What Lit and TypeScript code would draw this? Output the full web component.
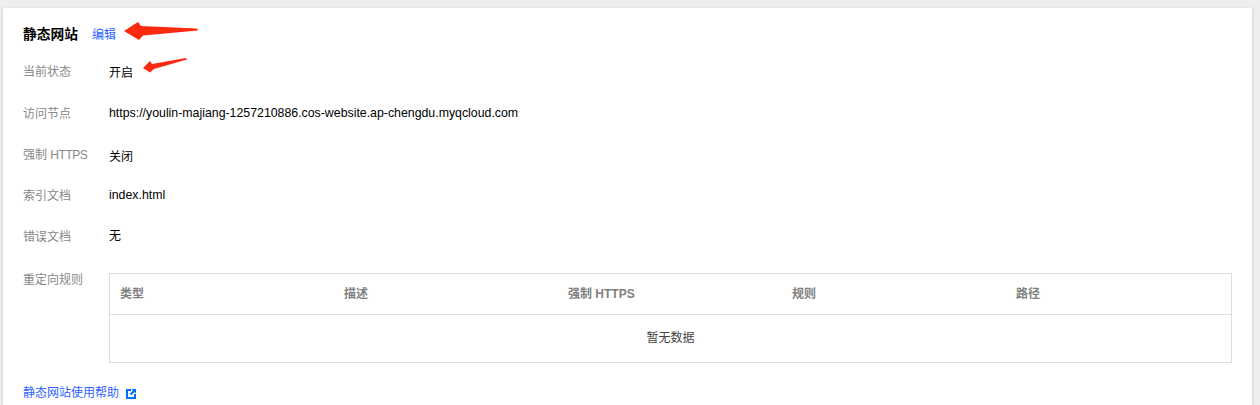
import { LitElement, html, css, svg } from 'lit';
import { customElement } from 'lit/decorators.js';

const COLUMNS = ['类型', '描述', '强制 HTTPS', '规则', '路径'];

// the two red hand-drawn arrows pasted over the screenshot
const arrows = svg`
  <path d="M124 31 L138 22 L141 26 L197 28.5 L198 30.5 L143 35.5 L139 40 Z" fill="#fb2a10"/>
  <path d="M143 68 L150 61 L152 64 L186 58 L187 59.5 L154 69 L150 72.5 Z" fill="#fb2a10"/>
`;

@customElement('app-root')
export class AppRoot extends LitElement {
  static styles = css`
    :host {
      display: block;
      height: 405px;
      overflow: hidden;
      position: relative;
      background: #eee;
      font-family: "Liberation Sans", "Noto Sans CJK SC", sans-serif;
      font-size: 12px;
      line-height: 18px;
      color: #000;
    }
    .card {
      box-sizing: border-box;
      margin: 8px 8px 0 3px;
      height: 397px;
      padding: 18px 20px 0 20px;
      background: #fff;
      box-shadow: 0 1px 3px rgba(0, 0, 0, 0.2);
    }
    .head {
      display: flex;
      align-items: center;
      gap: 14px;
      height: 18px;
    }
    h3 {
      margin: 0;
      font-size: 13.75px;
      font-weight: 700;
    }
    a {
      color: #2b5fff;
      text-decoration: none;
    }
    .rows {
      margin-top: 19px;
      display: flex;
      flex-direction: column;
      gap: 23px;
    }
    .row {
      display: flex;
      height: 18px;
    }
    .row:first-child { margin-bottom: 1px; }
    .label {
      width: 86px;
      flex: none;
      color: #888;
    }
    .tight { letter-spacing: -0.45px; }
    .off1 { padding-top: 1px; }
    .off2 { padding-top: 2px; }
    .up { margin-top: -1px; }
    .url { font-size: 12.33px; }
    .table-row {
      display: flex;
      margin-top: 27px;
    }
    .table-row .label { margin-top: -2px; }
    .table {
      flex: 1;
      border: 1px solid #ddd;
      height: 90px;
      box-sizing: border-box;
    }
    .thead {
      display: grid;
      grid-template-columns: repeat(5, 224px) 1fr;
      height: 40px;
      align-items: center;
      border-bottom: 1px solid #ddd;
      color: #808080;
      font-weight: 700;
    }
    .thead span { padding-left: 10px; }
    .empty {
      height: 46px;
      display: flex;
      align-items: center;
      justify-content: center;
      color: #444;
    }
    .help {
      display: flex;
      align-items: center;
      gap: 7px;
      margin-top: 21px;
    }
    .help svg { display: block; margin-top: 2px; }
    .arrows {
      position: absolute;
      inset: 0;
      pointer-events: none;
    }
  `;

  render() {
    return html`
      <div class="card">
        <div class="head">
          <h3>静态网站</h3>
          <a href="#">编辑</a>
        </div>
        <div class="rows">
          <div class="row"><div class="label">当前状态</div><div class="off1">开启</div></div>
          <div class="row"><div class="label">访问节点</div><div class="url up">https://youlin-majiang-1257210886.cos-website.ap-chengdu.myqcloud.com</div></div>
          <div class="row"><div class="label">强制 <span class="tight">HTTPS</span></div><div class="off2">关闭</div></div>
          <div class="row"><div class="label">索引文档</div><div class="url up">index.html</div></div>
          <div class="row"><div class="label">错误文档</div><div class="up">无</div></div>
        </div>
        <div class="table-row">
          <div class="label">重定向规则</div>
          <div class="table">
            <div class="thead">${COLUMNS.map(c => html`<span>${c}</span>`)}</div>
            <div class="empty">暂无数据</div>
          </div>
        </div>
        <div class="help">
          <a href="#">静态网站使用帮助</a>
          <svg width="10" height="10" viewBox="0 0 10 10">
            <path d="M0 0H5V2H2V8H8V5H10V10H0Z" fill="#006eff"/>
            <path d="M5.5 0H10V4.5L8.5 3L5.2 6.3L3.7 4.8L7 1.5Z" fill="#006eff"/>
          </svg>
        </div>
      </div>
      <svg class="arrows" width="1260" height="405" viewBox="0 0 1260 405">${arrows}</svg>
    `;
  }
}
